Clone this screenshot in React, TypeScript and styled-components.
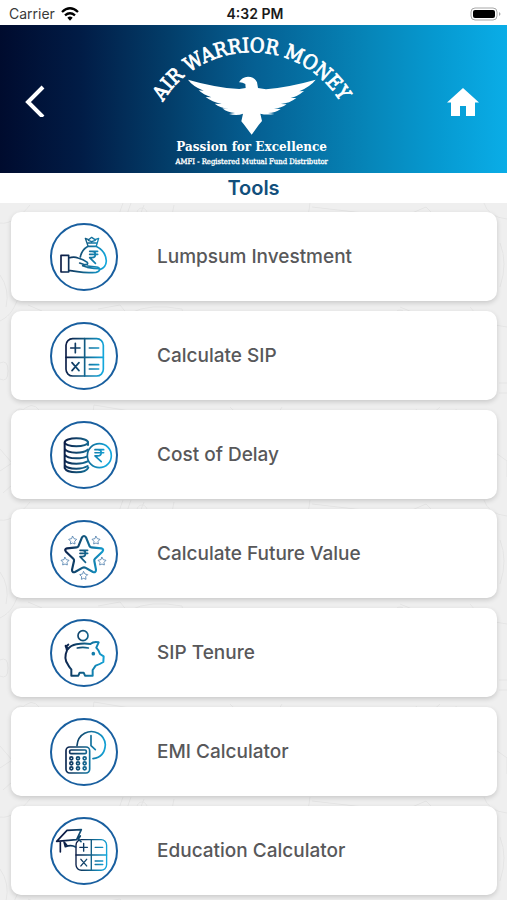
import React from "react";
import styled, { createGlobalStyle } from "styled-components";

const doodles = encodeURIComponent(
  `<svg xmlns="http://www.w3.org/2000/svg" width="507" height="297" viewBox="0 0 507 297" fill="none" stroke="#e5e5e5" stroke-width="1">
    <path d="M0 20C10 22 22 12 30 2M118 14l5-14M126 14l5-14M140 12l4-10M150 12h22l2-10M310 0l-2 14M312 4l52 6-6 10M398 16l28-12 12 12M484 0q4 14 23 16"/>
    <path d="M0 118C12 112 14 104 18 96M28 102l14 6M98 106l22-4 8 10M130 110q20-10 52-4l2 12M345 116q16-12 28 4M400 104l34 14M470 104q12 18 37 20M0 72q10 14 6 32M500 40q8 20 0 44"/>
    <path d="M20 210q12-14 20-2t12 4M92 216l2-14 60 10M230 204q12 10 8 18M282 204l-10 16M370 218v-10h40v10M416 206l6 12M440 204q-12 8 2 14M456 206l2 12"/>
    <circle cx="142" cy="10" r="5"/><circle cx="392" cy="214" r="6"/><circle cx="400" cy="112" r="5"/><circle cx="20" cy="212" r="6"/>
    <path d="M0 246l12 14-12 8M496 250l11 8v16M0 160q8-4 8 8t-8 8M499 180h8M499 190h8M3 290l9-8"/>
  </svg>`
);

const GlobalStyle = createGlobalStyle`
  *, *::before, *::after { box-sizing: border-box; }
  body { margin: 0; background: #efefef; font-family: Inter, "Open Sans", sans-serif; }
  button { font: inherit; color: inherit; border: 0; cursor: pointer; }
`;

const Screen = styled.div`
  min-height: 100vh;
  display: flex;
  flex-direction: column;
`;

const StatusBar = styled.div`
  display: grid;
  grid-template-columns: 1fr auto 1fr;
  align-items: center;
  height: 25px;
  padding: 2px 6px 0 9px;
  background: #fff;
  color: #1a1a1a;
  font-size: 14px;
  line-height: 20px;
`;

const Carrier = styled.div`
  display: flex;
  align-items: center;
  gap: 6px;
  color: #3a3a3a;
`;

const Clock = styled.time`
  font-weight: 600;
`;

const BatteryIcon = styled.svg`
  justify-self: end;
`;

const Header = styled.header`
  display: grid;
  grid-template-columns: 1fr auto 1fr;
  align-items: center;
  height: 148px;
  padding: 4px 24px 4px 20px;
  background: linear-gradient(90deg, #000b2e 0%, #011c46 16%, #033d69 33%, #055f92 50%, #0686b9 73%, #0699d0 86%, #0aade7 100%);
`;

const IconButton = styled.button<{ $end?: boolean }>`
  display: flex;
  padding: 0;
  background: none;
  color: #fff;
  justify-self: ${(p) => (p.$end ? "end" : "start")};
`;

const Title = styled.h1`
  margin: 0;
  height: 30px;
  background: #fff;
  color: #124f7c;
  font-size: 20px;
  font-weight: 600;
  line-height: 30px;
  text-align: center;
`;

const ToolList = styled.ul`
  flex: 1;
  display: flex;
  flex-direction: column;
  gap: 10px;
  margin: 0;
  padding: 9px 10px 5px 11px;
  list-style: none;
  background: #efefef url("data:image/svg+xml,${doodles}") 0 0 repeat;
`;

const ToolCard = styled.button`
  display: flex;
  align-items: center;
  gap: 39px;
  width: 100%;
  height: 89px;
  padding: 1px 39px 0;
  border-radius: 10px;
  background: #fff;
  color: #58585a;
  box-shadow: 0 2px 5px rgba(0, 0, 0, 0.16);
  font-size: 19px;
  font-weight: 500;
  line-height: 24px;
  text-align: left;
`;

const slab = `"DejaVu Serif Condensed", "DejaVu Serif", serif`;

const Logo = () => (
  <svg width="207" height="140" viewBox="30 3 621 420" fill="#fff" role="img" aria-label="Air Warrior Money">
    <defs>
      <path id="logo-arc" d="M60 248A312 312 0 0 1 621 248" />
    </defs>
    <text fontFamily={slab} fontSize="60" stroke="#fff" strokeWidth="2.5">
      <textPath href="#logo-arc" startOffset="50%" textAnchor="middle">AIR WARRIOR MONEY</textPath>
    </text>
    <path d="M303 163Q312 147 330 146Q351 147 357 163L360 180L384 184Q460 176 533 155Q520 173 484 190L498 189Q478 206 458 210L475 210Q455 226 428 228L446 229Q430 241 408 242L428 243Q412 255 390 255L409 258Q385 262 367 257L372 279L362 291L341 320L319 291L310 280L315 257Q297 265 273 258L291 255Q268 254 253 241L273 242Q247 240 230 227L251 228Q222 222 203 207L220 208Q196 200 182 187L197 188Q164 175 150 155Q228 178 304 183L323 180L322 168Q312 162 303 163Z" />
    <text x="341" y="369" fontFamily={slab} fontSize="40" fontWeight="700" textAnchor="middle">Passion for Excellence</text>
    <text x="341" y="407" fontFamily={slab} fontSize="23" stroke="#fff" strokeWidth="1" textAnchor="middle">AMFI - Registered Mutual Fund Distributor</text>
  </svg>
);

const Rupee = ({ x, y, w = 24, h = 36 }: { x: number; y: number; w?: number; h?: number }) => (
  <path
    d={`M${x} ${y}h${w}M${x} ${y + h * 0.26}h${w}M${x} ${y}h${w * 0.3}q${w * 0.42} 0 ${w * 0.42} ${h * 0.26}t${-w * 0.42} ${h * 0.26}h${-w * 0.3}l${w * 0.72} ${h * 0.48}`}
  />
);

const lumpsum = (
  <>
    <path d="M63 122H86V172H63ZM86 130Q102 125 114 130Q130 134 142 143Q146 151 134 150L119 145M86 167L112 171Q140 176 168 173Q181 170 178 162Q164 162 142 158L128 153" />
    <path d="M121 127Q125 106 144 95H168Q198 110 199 139Q198 157 182 164M143 154L170 157Q178 158 179 164" />
    <path d="M144 94L136 71L146 75L155 68L165 75L176 71L169 94M144 85H169M145 77L155 81L166 77" strokeWidth="4" />
    <Rupee x={149} y={110} />
  </>
);

const calculatorGrid = (x: number, y: number, s: number, id: string) => (
  <g transform={`translate(${x} ${y}) scale(${s})`} stroke={`url(#grid-${id})`}>
    <rect x="0" y="0" width="112" height="112" rx="20" />
    <path d="M56 0V112M0 56H112M14 28H42M28 14V42M70 28H98M18 72L39 96M39 72L18 96M70 78H98M70 91H98" />
  </g>
);

const delay = (
  <>
    <ellipse cx="109" cy="89" rx="35" ry="12" strokeWidth="6" />
    <path d="M74 91V166Q80 179 109 179Q139 179 145 165M144 89V97M74 108Q80 120 109 120Q132 120 143 111M74 125Q80 137 109 137Q130 137 140 132M74 142Q80 153 109 153Q130 153 143 146M74 157Q80 168 109 168Q130 168 143 160" strokeWidth="6" />
    <circle cx="178" cy="129" r="36" />
    <Rupee x={165} y={111} w={26} />
  </>
);

const pentagonStar = (x: number, y: number) => (
  <path
    key={`${x}-${y}`}
    d={`M${x} ${y - 12}L${x + 4} ${y - 5}L${x + 12} ${y - 3}L${x + 6} ${y + 3}L${x + 7} ${y + 11}L${x} ${y + 8}L${x - 7} ${y + 11}L${x - 6} ${y + 3}L${x - 12} ${y - 3}L${x - 4} ${y - 5}Z`}
    stroke="#4f80ad"
    strokeWidth="2.5"
  />
);

const futureValue = (
  <>
    <path
      d="M126 77Q132 69 138 77L149 104Q151 107 154 107L184 110Q193 112 187 120L165 141Q162 144 163 148L168 174Q168 184 159 181L136 168Q132 166 128 168L105 181Q96 184 96 174L102 148Q103 144 100 141L78 120Q72 112 81 110L110 107Q113 107 115 104Z"
      strokeWidth="6.5"
    />
    {[[98, 86], [168, 86], [75, 149], [186, 149], [131, 192]].map(([x, y]) => pentagonStar(x, y))}
    <Rupee x={120} y={116} w={23} />
  </>
);

const tenure = (
  <>
    <circle cx="129" cy="75" r="15" />
    <path
      d="M77 105Q77 111 84 113M85 102Q76 107 81 119Q70 143 84 162Q89 171 94 176V195H115L119 186H131L135 195H158V178L167 165Q180 160 190 154L191 137L180 130Q175 116 169 111L176 95Q162 91 151 100Q131 97 109 101Q92 104 83 116"
      strokeWidth="6"
    />
    <path d="M112 112Q128 108 145 112" />
    <circle cx="160" cy="129" r="3" fill="#1689b8" />
  </>
);

const emi = (
  <>
    <path d="M111 108Q113 82 134 71A42 42 0 0 1 196 105Q194 143 159 147" />
    <path d="M153 78V108L166 120" />
    <rect x="78" y="112" width="71" height="78" rx="11" />
    <rect x="89" y="121" width="50" height="11" rx="4" />
    {[146, 161, 176].map((y) => [94, 114, 134].map((x) => <circle key={`${x}-${y}`} cx={x} cy={y} r="4.5" />))}
  </>
);

const education = (
  <>
    {calculatorGrid(108, 93, 0.82, "education")}
    <path d="M50 98L81 65L124 63L110 93ZM61 101V130M72 99L76 114Q94 107 107 115M121 82L115 91L123 99M82 112L75 103" />
  </>
);

const tools = [
  { id: "lumpsum", label: "Lumpsum Investment", art: lumpsum },
  { id: "sip", label: "Calculate SIP", art: calculatorGrid(78, 75, 1, "sip") },
  { id: "delay", label: "Cost of Delay", art: delay },
  { id: "future", label: "Calculate Future Value", art: futureValue },
  { id: "tenure", label: "SIP Tenure", art: tenure },
  { id: "emi", label: "EMI Calculator", art: emi },
  { id: "education", label: "Education Calculator", art: education },
];

const ToolIcon = ({ id, children }: { id: string; children: React.ReactNode }) => (
  <svg width="68" height="68" viewBox="30 25 204 204" fill="none" strokeLinecap="round" strokeLinejoin="round" aria-hidden="true">
    <defs>
      <linearGradient id={`ink-${id}`} gradientUnits="userSpaceOnUse" x1="70" y1="110" x2="200" y2="125">
        <stop offset="0" stopColor="#0c1c45" />
        <stop offset="0.45" stopColor="#12587f" />
        <stop offset="1" stopColor="#13a7dc" />
      </linearGradient>
      <linearGradient id={`grid-${id}`} gradientUnits="userSpaceOnUse" x1="0" y1="45" x2="112" y2="56">
        <stop offset="0" stopColor="#0c1c45" />
        <stop offset="0.45" stopColor="#12587f" />
        <stop offset="1" stopColor="#13a7dc" />
      </linearGradient>
    </defs>
    <circle cx="132" cy="127" r="99" stroke="#195f9f" strokeWidth="6" />
    <g stroke={`url(#ink-${id})`} strokeWidth="5">{children}</g>
  </svg>
);

export default function App() {
  return (
    <Screen>
      <GlobalStyle />
      <StatusBar>
        <Carrier>
          Carrier
          <svg width="18" height="14" viewBox="0 0 54 42" fill="none" stroke="#000" strokeWidth="7" aria-label="Wi-Fi">
            <path d="M3 15Q27-7 51 15M12 25Q27 12 42 25" />
            <path d="M19 32Q27 25 35 32L27 41Z" fill="#000" stroke="none" />
          </svg>
        </Carrier>
        <Clock>4:32 PM</Clock>
        <BatteryIcon width="31" height="14" viewBox="0 0 31 14" aria-label="Battery full">
          <rect x="1" y="1" width="26" height="12" rx="4" fill="#fff" stroke="#a8a8a8" />
          <rect x="3" y="3" width="22" height="8" rx="2" fill="#000" />
          <path d="M29 5q3 2 0 4z" fill="#a8a8a8" />
        </BatteryIcon>
      </StatusBar>
      <Header>
        <IconButton aria-label="Back">
          <svg width="30" height="36" viewBox="0 0 30 36" fill="none" stroke="currentColor" strokeWidth="4">
            <path d="M23 6L8 21L23 36" />
          </svg>
        </IconButton>
        <Logo />
        <IconButton $end aria-label="Home">
          <svg width="36" height="36" viewBox="0 0 36 36" fill="currentColor">
            <path d="M16 7L0 21.500H4V35H13V25H19V35H28V21.500H32Z" />
          </svg>
        </IconButton>
      </Header>
      <Title>Tools</Title>
      <ToolList>
        {tools.map(({ id, label, art }) => (
          <li key={id}>
            <ToolCard>
              <ToolIcon id={id}>{art}</ToolIcon>
              {label}
            </ToolCard>
          </li>
        ))}
      </ToolList>
    </Screen>
  );
}
